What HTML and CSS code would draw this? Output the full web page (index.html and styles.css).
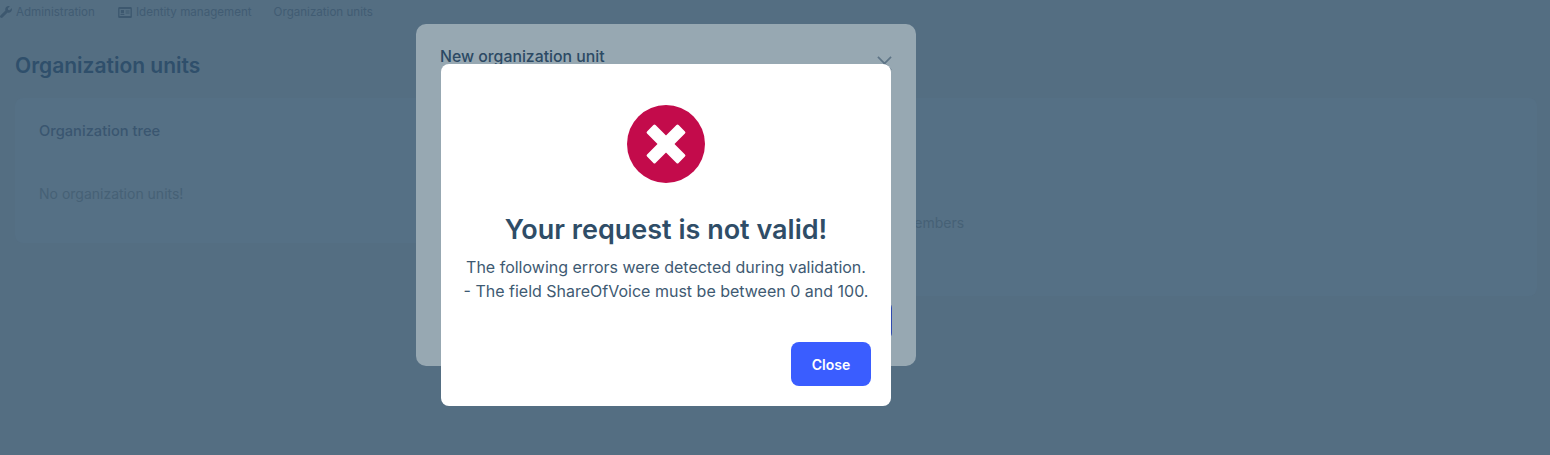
FILE: index.html
```html
<!DOCTYPE html>
<html lang="en">
<head>
<meta charset="utf-8">
<title>Organization units</title>
<link rel="stylesheet" href="styles.css">
</head>
<body>
<div class="page">
  <nav class="crumbs">
    <span class="crumb">
      <svg class="crumb-icon" viewBox="0 0 512 512"><path d="M507.7 109.1c-2.2-9-13.5-12.1-20.1-5.5l-74.4 74.4-67.9-11.3-11.3-67.9 74.4-74.4c6.600-6.600 3.400-17.900-5.700-20.200-47.400-11.700-99.500.9-136.600 38-39.700 39.700-50.900 96.400-34.600 146.700L18.700 402.700c-25 25-25 65.500 0 90.500s65.500 25 90.500 0l213-213c50.300 16.500 107.100 5.200 146.900-34.600 37.100-37.100 49.700-89.300 38.600-136.500z"/></svg>
      Administration
    </span>
    <span class="crumb">
      <svg class="crumb-icon crumb-icon-card" viewBox="0 0 20 16"><path fill-rule="evenodd" d="M2 0h16a2 2 0 0 1 2 2v12a2 2 0 0 1-2 2H2a2 2 0 0 1-2-2V2a2 2 0 0 1 2-2zm0 3v10h16V3zm2 1.500h4.500V9H4zM3.500 10h5.500v1.800H3.500zM11 5h5.500v1.500H11zm0 3h5.500v1.500H11z"/></svg>
      Identity management
    </span>
    <span class="crumb">Organization units</span>
  </nav>
  <h1 class="page-title">Organization units</h1>
  <div class="columns">
    <section class="card card-tree">
      <h2 class="card-title">Organization tree</h2>
      <p class="muted">No organization units!</p>
    </section>
    <section class="card card-members">
      <p class="muted members-hint">Select an organization unit to see its members</p>
    </section>
  </div>
  <footer class="foot">© ll</footer>
</div>

<div class="unit-modal">
  <div class="unit-head">
    <span class="unit-title">New organization unit</span>
    <svg class="unit-close" viewBox="0 0 16 16"><path d="M1 1l14 14M15 1L1 15"/></svg>
  </div>
  <div class="unit-foot"><span class="unit-save"></span></div>
</div>

<div class="alert" role="alert">
  <svg class="alert-icon" viewBox="0 0 78 78">
    <circle cx="39" cy="39" r="39"/>
    <rect x="33" y="16.700" width="12" height="44.600" rx="1.500" transform="rotate(45 39 39)"/>
    <rect x="33" y="16.700" width="12" height="44.600" rx="1.500" transform="rotate(-45 39 39)"/>
  </svg>
  <h2 class="alert-title">Your request is not valid!</h2>
  <div class="alert-text">The following errors were detected during validation.<br>- The field ShareOfVoice must be between 0 and 100.</div>
  <div class="alert-actions"><button class="alert-btn" type="button">Close</button></div>
</div>
</body>
</html>
```
FILE: styles.css
```css
* { box-sizing: border-box; }
html, body { margin: 0; height: 100%; }
body {
  background: #546e82;
  color: #3d586f;
  font-family: Inter, "Liberation Sans", sans-serif;
  overflow: hidden;
  position: relative;
}
.page { height: 455px; overflow: hidden; }
.crumbs {
  display: flex;
  gap: 22px;
  height: 24px;
  align-items: center;
  font-size: 11.600px;
  color: #415c73;
}
.crumb { display: flex; align-items: center; gap: 4px; white-space: nowrap; }
.crumb-icon { width: 12px; height: 12px; fill: #3d586f; }
.crumb-icon-card { width: 14px; height: 11px; margin-left: 1px; }
.page-title {
  margin: 29px 0 0 15px;
  font-size: 21px;
  line-height: 26px;
  font-weight: 600;
  color: #2f4f6b;
}
.columns { display: flex; margin: 19px 13px 0 15px; gap: 24px; align-items: flex-start; }
.card {
  background: #557085;
  border-radius: 8px;
}
.card-tree { width: 440px; height: 145px; padding: 24px; flex: none; }
.card-members { flex: 1; height: 198px; padding: 116px 0 0 180px; }
.card-title { margin: 0; font-size: 14.700px; line-height: 18px; font-weight: 500; color: #3a5670; }
.muted { margin: 0; font-size: 14px; line-height: 18px; color: #466176; }
.card-tree .muted { margin-top: 45px; }
.foot { margin: 157px 0 0 5px; font-size: 11px; line-height: 12px; color: #3d586f; }

.unit-modal {
  position: absolute;
  left: 416px;
  top: 24px;
  width: 500px;
  height: 342px;
  background: #97a8b2;
  border-radius: 10px;
  padding: 24px 24px 27px;
  display: flex;
  flex-direction: column;
  justify-content: space-between;
}
.unit-head { display: flex; justify-content: space-between; align-items: flex-start; }
.unit-title { font-size: 15.800px; line-height: 18px; font-weight: 500; color: #2c4a64; }
.unit-close { width: 15px; height: 15px; margin-top: 8px; fill: none; stroke: #5d7486; stroke-width: 1.800; }
.unit-foot { display: flex; justify-content: flex-end; }
.unit-save { width: 100px; height: 37px; background: #2f4bb0; border-radius: 6px; }

.alert {
  position: absolute;
  left: 441px;
  top: 64px;
  width: 450px;
  height: 342px;
  background: #fff;
  border-radius: 8px;
  padding: 41px 20px 20px;
  display: flex;
  flex-direction: column;
  align-items: center;
}
.alert-icon { width: 78px; height: 78px; flex: none; }
.alert-icon circle { fill: #c30b4b; }
.alert-icon rect { fill: #fff; }
.alert-title {
  margin: 29px 0 0;
  font-size: 27px;
  line-height: 36px;
  font-weight: 600;
  color: #2f4d67;
  white-space: nowrap;
}
.alert-text {
  margin-top: 7px;
  font-size: 16px;
  line-height: 24px;
  text-align: center;
  color: #3e5a72;
  white-space: nowrap;
}
.alert-actions { margin-top: auto; align-self: flex-end; }
.alert-btn {
  display: block;
  width: 80px;
  height: 44px;
  border: 0;
  border-radius: 8px;
  background: #3a5dff;
  color: #fff;
  font-family: inherit;
  font-size: 14px;
  font-weight: 600;
}
```
